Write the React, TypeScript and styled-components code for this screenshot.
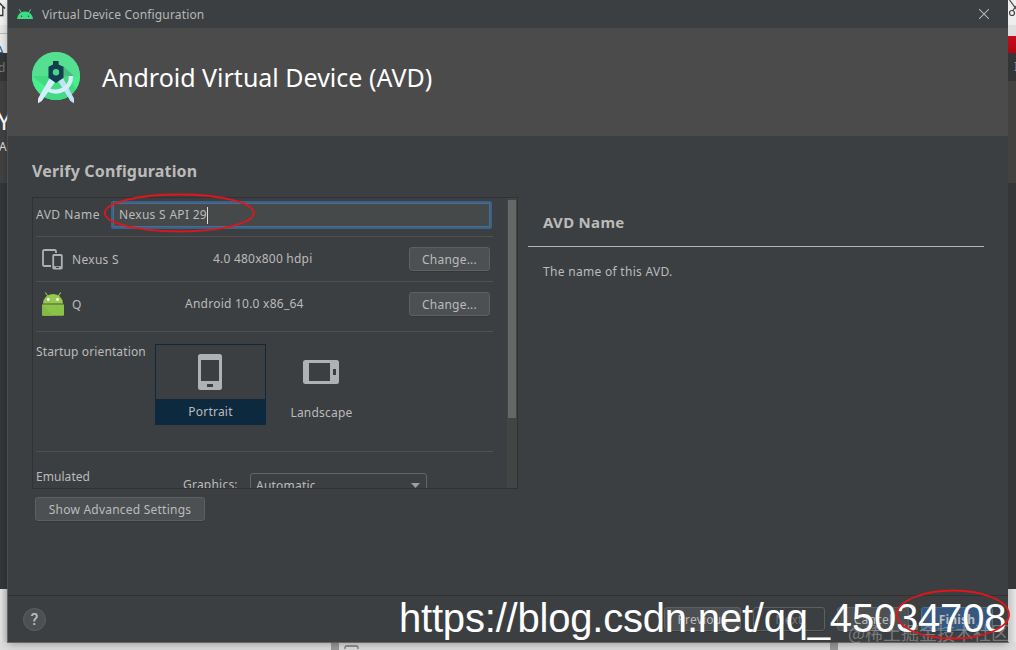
import styled, { createGlobalStyle } from "styled-components";

interface TextProps {
  $spacing?: number;
  $drop?: number;
  $color?: string;
}

interface ButtonProps {
  $width: number;
  $primary?: boolean;
  $disabled?: boolean;
}

interface BlockProps {
  $height: number;
  $bg: string;
}

function AndroidHead() {
  return (
    <svg width="16" height="10" viewBox="0 0 16 10">
      <path d="M0 10a8 7.6 0 0 1 16 0z" fill="#3ddc84" />
      <path d="M2.4 .6l2 3.2M13.6 .6l-2 3.2" stroke="#3ddc84" strokeWidth="1" strokeLinecap="round" />
      <circle cx="4.5" cy="7.2" r=".75" fill="#28573f" />
      <circle cx="11.5" cy="7.2" r=".75" fill="#28573f" />
    </svg>
  );
}

function StudioLogo() {
  return (
    <svg width="48" height="52" viewBox="0 0 48 52">
      <circle cx="24" cy="24" r="24" fill="#42d981" />
      <path d="M0 24a24 24 0 0 1 48 0z" fill="#55df91" />
      <path d="M0 24a24 24 0 0 0 48 0h-8L28 46z" fill="#48ee8d" />
      <path d="M24 30h16l4 7a24 24 0 0 1-32 8z" fill="#40dc83" />
      <path d="M31 14l11 10h-11z" fill="#48bb7e" />
      <path d="M26 29l5-3L42 46.500v4.700l-3.600-2.200z" fill="#c2e2f7" />
      <path d="M17.500 26.500l5.500 3.500L9.800 49 6 51.300V46.600z" fill="#d7edfc" />
      <path d="M15.500 37.500c10.500 5.500 23.500-.5 23.500-13.500" fill="none" stroke="#d7edfc" strokeWidth="4.200" />
      <path d="M21 9h5.600v3.500l4.900 2.200v11L24 31l-7.500-5.300v-11L21 12.500z" fill="#153c4f" />
      <circle cx="24" cy="20.300" r="3.200" fill="#4bd48b" />
    </svg>
  );
}

function DevicesIcon() {
  return (
    <svg width="21" height="21" viewBox="0 0 21 21" fill="none" stroke="#afb1b3">
      <path d="M9 17H2.500Q1 17 1 15.500V2.500Q1 1 2.500 1h10Q14 1 14 2.500V4" strokeWidth="1.800" />
      <rect x="11.200" y="6" width="8.600" height="13.500" rx=".8" strokeWidth="1.800" />
      <path d="M11 18.500h9" strokeWidth="2.600" />
      <path d="M14 18.500h3" stroke="#3c3f41" strokeWidth="1" />
    </svg>
  );
}

function AndroidBody() {
  return (
    <svg width="22" height="24" viewBox="0 0 22 24">
      <path d="M3.200 .5l3 4M18.800 .5l-3 4" stroke="#8bc34a" strokeWidth="1.200" />
      <path d="M1 11.500a10 9.600 0 0 1 20 0z" fill="#95c94f" />
      <path d="M0 12.500h22V22.500q0 1.300-1.300 1.300H1.300Q0 23.800 0 22.500z" fill="#8bc34a" />
      <path d="M1 11.500h20v1H1z" fill="#72a63a" />
      <path d="M0 12.500l11 11.300H1.300Q0 23.800 0 22.500z" fill="#84b946" />
      <circle cx="6.200" cy="7.500" r="1.400" fill="#fff" />
      <circle cx="15.500" cy="7.500" r="1.400" fill="#fff" />
    </svg>
  );
}

function PhoneIcon({ landscape }: { landscape?: boolean }) {
  return landscape ? (
    <svg width="36" height="24" viewBox="0 0 36 24">
      <path fillRule="evenodd" fill="#afb1b3" d="M2.500 0h31Q36 0 36 2.500v19q0 2.500-2.500 2.500h-31Q0 24 0 21.500v-19Q0 0 2.500 0zM6 3v18h21V3zM30 9v6h3V9z" />
    </svg>
  ) : (
    <svg width="24" height="36" viewBox="0 0 24 36">
      <path fillRule="evenodd" fill="#afb1b3" d="M2.500 0h19Q24 0 24 2.500v31q0 2.500-2.500 2.500h-19Q0 36 0 33.500v-31Q0 0 2.500 0zM3 6v21h18V6zM9 30v3h6v-3z" />
    </svg>
  );
}

function App() {
  return (
    <Desktop>
      <GlobalStyle />
      <Middle>
        <Strip>
          <Block $height={25} $bg="#f1f1f1">
            <svg width="8" height="25" fill="none" stroke="#333" strokeWidth="1.300">
              <path d="M-3 10L0 3.500 5 8.500M2.800 7v8.500H0" />
            </svg>
          </Block>
          <Block $height={8} $bg="#e5e5e5" />
          <Block $height={1} $bg="#b9b9b9" />
          <Block $height={19} $bg="#e8e8e8">
            <Peek $color="#28649b" $size={15} $left={-5} $top={9}>A</Peek>
          </Block>
          <Block $height={28} $bg="#333537">
            <Peek $color="#77797a" $size={12} $left={-2} $top={9}>d</Peek>
          </Block>
          <Block $height={102} $bg="#414141">
            <Peek $color="#fff" $size={25} $left={-3} $top={27}>Y</Peek>
            <Peek $color="#ddd" $size={12} $left={-1} $top={60}>A</Peek>
          </Block>
          <Block $height={406} $bg="#333638" />
          <Block $height={53} $bg="linear-gradient(90deg, #e4e4e4, #c6c6c6)" />
        </Strip>
        <Dialog>
          <TitleBar>
            <AndroidHead />
            <Text $spacing={0.16} $drop={1} $color="#b5b7b8">Virtual Device Configuration</Text>
            <Close width="10" height="10" viewBox="0 0 10 10" stroke="#b0b2b3" strokeWidth="1.100">
              <path d="M0 0l10 10M10 0L0 10" />
            </Close>
          </TitleBar>
          <Header>
            <StudioLogo />
            <Title>Android Virtual Device (AVD)</Title>
          </Header>
          <Body>
            <Left>
              <Heading>Verify Configuration</Heading>
              <ScrollPane>
                <Viewport>
                  <NameRow>
                    <Text $spacing={0.48}>AVD Name</Text>
                    <NameInput>
                      <Text $spacing={0.3}>Nexus S API 29</Text>
                      <Caret />
                    </NameInput>
                  </NameRow>
                  <DeviceRow $height={45}>
                    <IconCell><DevicesIcon /></IconCell>
                    <Text $drop={1} $spacing={0.3}>Nexus S</Text>
                    <Details><Text $drop={1}>4.0 480x800 hdpi</Text></Details>
                    <Button $width={81}>Change...</Button>
                  </DeviceRow>
                  <DeviceRow $height={50}>
                    <IconCell><AndroidBody /></IconCell>
                    <Text $drop={1}>Q</Text>
                    <Details $release><Text $drop={1} $spacing={0.24}>Android 10.0 x86_64</Text></Details>
                    <Button $width={81}>Change...</Button>
                  </DeviceRow>
                  <OrientationRow>
                    <Label>Startup orientation</Label>
                    <Orientation $selected>
                      <Picture><PhoneIcon /></Picture>
                      <Caption $selected>Portrait</Caption>
                    </Orientation>
                    <Orientation>
                      <Picture><PhoneIcon landscape /></Picture>
                      <Caption>Landscape</Caption>
                    </Orientation>
                  </OrientationRow>
                  <EmulatedRow>
                    <EmulatedLabel>Emulated</EmulatedLabel>
                    <GraphicsLabel>Graphics:</GraphicsLabel>
                    <Select>
                      <Text $drop={1}>Automatic</Text>
                      <svg width="9" height="5"><path d="M0 0h9L4.500 5z" fill="#9da0a3" /></svg>
                    </Select>
                  </EmulatedRow>
                </Viewport>
                <Track><Thumb /></Track>
              </ScrollPane>
              <Advanced>
                <Button $width={170}>Show Advanced Settings</Button>
              </Advanced>
            </Left>
            <Help>
              <HelpHeading>AVD Name</HelpHeading>
              <HelpText>The name of this AVD.</HelpText>
            </Help>
          </Body>
          <Footer>
            <HelpButton>?</HelpButton>
            <FooterActions>
              <Button $width={77}>Previous</Button>
              <Button $width={72} $disabled>Next</Button>
              <Button $width={72}>Cancel</Button>
              <Button $width={72} $primary>Finish</Button>
            </FooterActions>
          </Footer>
        </Dialog>
        <Strip>
          <Block $height={25} $bg="#eeeeee">
            <svg width="8" height="25" fill="none" stroke="#444" strokeWidth="1.200">
              <path d="M1.500 0L9 10M8 6L4.500 11" />
              <circle cx="4" cy="13" r="2.500" />
            </svg>
          </Block>
          <Block $height={11} $bg="#dedede" />
          <Block $height={17} $bg="linear-gradient(#c90a1c, #ae0711)" />
          <Block $height={28} $bg="#333537">
            <Peek $color="#8e9091" $size={12} $left={6} $top={8}>I</Peek>
          </Block>
          <Block $height={102} $bg="#434241" />
          <Block $height={406} $bg="#343637" />
          <Block $height={53} $bg="linear-gradient(90deg, #c4c4c4, #e7e7e7)" />
        </Strip>
      </Middle>
      <Bottom>
        <Divider $left={331} />
        <svg width="16" height="7" fill="none" stroke="#777" strokeWidth="1.300">
          <rect x="1" y="4" width="13" height="10" rx="1.500" />
        </svg>
        <Divider $left={470} />
      </Bottom>
      <Community>@稀土掘金技术社区</Community>
      <Watermark>https://blog.csdn.net/qq_45034708</Watermark>
      <Marks width="1016" height="650" fill="none" stroke="#e2151b" strokeWidth="1.800">
        <ellipse cx="179.300" cy="213" rx="74.500" ry="18.500" />
        <ellipse cx="953" cy="614.500" rx="56" ry="24" />
      </Marks>
    </Desktop>
  );
}

export default App;

const GlobalStyle = createGlobalStyle`
  * {
    box-sizing: border-box;
  }

  body {
    margin: 0;
    overflow: hidden;
    font-family: "Noto Sans", "Open Sans", sans-serif;
    font-size: 12px;
    line-height: 18px;
    letter-spacing: 0.22px;
    color: #bbbbbb;
  }

  svg {
    display: block;
    flex: none;
  }
`;

const Desktop = styled.div`
  position: relative;
  width: 1016px;
  height: 650px;
  overflow: hidden;
  display: flex;
  flex-direction: column;
  background: #dcdcdc;
`;

const Middle = styled.div`
  height: 642px;
  display: flex;
`;

const Strip = styled.div`
  width: 8px;
  overflow: hidden;
`;

const Block = styled.div<BlockProps>`
  position: relative;
  height: ${(props) => props.$height}px;
  background: ${(props) => props.$bg};
  overflow: hidden;
`;

const Peek = styled.span<{ $color: string; $size: number; $left: number; $top: number }>`
  position: absolute;
  left: ${(props) => props.$left}px;
  top: ${(props) => props.$top}px;
  color: ${(props) => props.$color};
  font-size: ${(props) => props.$size}px;
  line-height: 1;
`;

const Dialog = styled.div`
  position: relative;
  width: 1000px;
  height: 642px;
  display: flex;
  flex-direction: column;
  background: #3c3f41;
  box-shadow: 0 0 0 1px rgba(85, 85, 85, 0.8), 0 2px 8px rgba(0, 0, 0, 0.3);
`;

const Text = styled.span<TextProps>`
  padding-top: ${(props) => (props.$drop || 0) * 2}px;
  letter-spacing: ${(props) => props.$spacing ?? 0.22}px;
  color: ${(props) => props.$color || "#bbbbbb"};
  white-space: nowrap;
`;

const TitleBar = styled.div`
  height: 28px;
  padding: 0 19px 0 9px;
  display: flex;
  align-items: center;
  gap: 9px;
`;

const Close = styled.svg`
  margin-left: auto;
`;

const Header = styled.div`
  height: 108px;
  padding: 24px 24px 0;
  display: flex;
  align-items: flex-start;
  gap: 22px;
  background: #4b4b4b;
`;

const Title = styled.h1`
  margin: 7px 0 0;
  font-size: 25px;
  line-height: 36px;
  font-weight: 400;
  letter-spacing: 0;
  color: #fff;
  white-space: nowrap;
`;

const Body = styled.div`
  height: 459px;
  padding: 21px 24px 0;
  display: flex;
  gap: 10px;
`;

const Left = styled.div`
  width: 486px;
`;

const Heading = styled.h2`
  margin: 0;
  height: 40px;
  font-size: 16px;
  line-height: 28px;
  font-weight: 700;
  letter-spacing: 0.18px;
`;

const ScrollPane = styled.div`
  height: 292px;
  border: 1px solid #323232;
  display: flex;
  overflow: hidden;
`;

const Viewport = styled.div`
  width: 474px;
  padding: 0 14px 0 3px;
  overflow: hidden;
`;

const Row = styled.div`
  display: flex;
  border-bottom: 1px solid #515151;
`;

const NameRow = styled(Row)`
  height: 39px;
  padding: 3px 1px 7px 0;
  align-items: center;
  justify-content: space-between;
`;

const NameInput = styled.div`
  width: 381px;
  height: 28px;
  padding-left: 6px;
  display: flex;
  align-items: center;
  border: 2px solid #3d6185;
  border-radius: 2px;
  outline: 1px solid #466d94;
  outline-offset: -3px;
  background: #45494a;
`;

const Caret = styled.div`
  width: 1px;
  height: 17px;
  background: #ddd;
`;

const DeviceRow = styled(Row)<{ $height: number }>`
  height: ${(props) => props.$height}px;
  padding: ${(props) => (props.$height === 50 ? "0 3px 5px 0" : "0 3px 0 0")};
  align-items: center;
`;

const IconCell = styled.div`
  width: 36px;
  padding-left: 6px;
`;

const Details = styled.div<{ $release?: boolean }>`
  position: absolute;
  left: ${(props) => (props.$release ? 177 : 205)}px;
  padding-bottom: 0;
`;

const Button = styled.button<ButtonProps>`
  width: ${(props) => props.$width}px;
  height: 24px;
  margin-left: auto;
  padding: 1px 0 0;
  border: 1px solid ${(props) => (props.$primary ? "#4c708c" : "#5e6060")};
  border-radius: 3px;
  background: ${(props) => (props.$primary ? "#365880" : props.$disabled ? "#3c3f41" : "#4c5052")};
  box-shadow: 0 1px 0 rgba(0, 0, 0, 0.12);
  color: ${(props) => (props.$disabled ? "#777777" : "#bbbbbb")};
  font-family: inherit;
  font-size: 12px;
  font-weight: ${(props) => (props.$primary ? 700 : 400)};
  letter-spacing: 0.22px;
  line-height: 21px;
  white-space: nowrap;
`;

const OrientationRow = styled(Row)`
  height: 120px;
  padding-top: 12px;
`;

const Label = styled.div`
  width: 119px;
  line-height: 16px;
  letter-spacing: 0.12px;
  white-space: nowrap;
`;

const Orientation = styled.div<{ $selected?: boolean }>`
  width: 111px;
  height: 81px;
  display: flex;
  flex-direction: column;
  border: 1px solid ${(props) => (props.$selected ? "#0d293e" : "transparent")};
`;

const Picture = styled.div`
  height: 54px;
  padding-right: 2px;
  display: flex;
  align-items: center;
  justify-content: center;
`;

const Caption = styled.div<{ $selected?: boolean }>`
  flex: 1;
  padding-top: ${(props) => (props.$selected ? 4 : 5)}px;
  text-align: center;
  background: ${(props) => (props.$selected ? "#0d293e" : "transparent")};
`;

const EmulatedRow = styled.div`
  height: 60px;
  display: flex;
  align-items: flex-start;
`;

const EmulatedLabel = styled.div`
  width: 147px;
  padding-top: 16px;
  letter-spacing: 0.05px;
`;

const GraphicsLabel = styled.div`
  width: 67px;
  padding-top: 24px;
`;

const Select = styled.div`
  width: 177px;
  height: 24px;
  margin-top: 21px;
  padding: 0 6px 0 5px;
  display: flex;
  align-items: center;
  justify-content: space-between;
  border: 1px solid #646464;
  border-radius: 3px;
`;

const Track = styled.div`
  width: 10px;
  padding: 2px 1px 0;
  background: #434545;
`;

const Thumb = styled.div`
  height: 218px;
  background: #666867;
`;

const Advanced = styled.div`
  display: flex;
  width: 173px;
  padding-top: 8px;
`;

const Help = styled.div`
  width: 456px;
  padding-top: 52px;
`;

const HelpHeading = styled.h3`
  margin: 0;
  height: 38px;
  padding-left: 15px;
  border-bottom: 1px solid #b4b4b4;
  font-size: 15px;
  line-height: 26px;
  font-weight: 700;
  letter-spacing: 0.3px;
`;

const HelpText = styled.p`
  margin: 0;
  padding: 16px 0 0 15px;
  letter-spacing: 0.3px;
`;

const Footer = styled.div`
  height: 47px;
  padding: 0 15px;
  display: flex;
  align-items: center;
  justify-content: space-between;
  border-top: 1px solid #303234;
`;

const HelpButton = styled.div`
  width: 23px;
  height: 23px;
  border: 1px solid #5e6060;
  border-radius: 50%;
  background: #4c5052;
  font-family: Roboto, sans-serif;
  font-size: 16px;
  font-weight: 500;
  line-height: 22px;
  text-align: center;
`;

const FooterActions = styled.div`
  display: flex;
  gap: 12px;
`;

const Bottom = styled.div`
  height: 8px;
  display: flex;
  overflow: hidden;
`;

const Divider = styled.div<{ $left: number }>`
  width: 8px;
  height: 8px;
  margin-left: ${(props) => props.$left}px;
  margin-right: 5px;
  background: #999;
`;

const Watermark = styled.div`
  position: absolute;
  left: 399px;
  top: 594px;
  font-family: "Liberation Sans", sans-serif;
  font-size: 40px;
  line-height: 48px;
  letter-spacing: -0.2px;
  color: #fff;
  white-space: nowrap;
`;

const Community = styled.div`
  position: absolute;
  left: 848px;
  top: 620px;
  font-family: "Noto Sans CJK SC", sans-serif;
  font-size: 18px;
  line-height: 24px;
  letter-spacing: 0;
  color: rgba(170, 172, 174, 0.55);
  white-space: nowrap;
`;

const Marks = styled.svg`
  position: absolute;
  left: 0;
  top: 0;
`;
